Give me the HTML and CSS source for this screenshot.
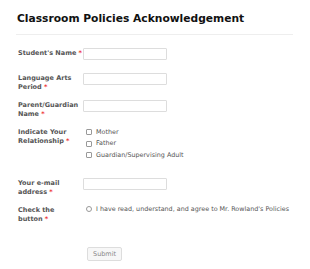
FILE: index.html
```html
<!DOCTYPE html>
<html lang="en">
<head>
  <meta charset="utf-8">
  <title>Classroom Policies Acknowledgement</title>
  <link rel="stylesheet" href="styles.css">
</head>
<body>
  <div class="form">
    <h1 class="form-title">Classroom Policies Acknowledgement</h1>
    <ul class="fields">
      <li class="field">
        <label class="field-label">Student's Name&nbsp;<span class="req">*</span></label>
        <div class="field-input"><input class="text" type="text"></div>
      </li>
      <li class="field">
        <label class="field-label">Language Arts Period&nbsp;<span class="req">*</span></label>
        <div class="field-input"><input class="text" type="text"></div>
      </li>
      <li class="field">
        <label class="field-label">Parent/Guardian Name&nbsp;<span class="req">*</span></label>
        <div class="field-input"><input class="text" type="text"></div>
      </li>
      <li class="field">
        <label class="field-label">Indicate Your Relationship&nbsp;<span class="req">*</span></label>
        <div class="field-input options">
          <label class="option"><span class="box"></span>Mother</label>
          <label class="option"><span class="box"></span>Father</label>
          <label class="option"><span class="box"></span>Guardian/Supervising Adult</label>
        </div>
      </li>
      <li class="field">
        <label class="field-label">Your e-mail address&nbsp;<span class="req">*</span></label>
        <div class="field-input"><input class="text" type="text"></div>
      </li>
      <li class="field">
        <label class="field-label">Check the button&nbsp;<span class="req">*</span></label>
        <div class="field-input">
          <label class="option"><span class="box round"></span>I have read, understand, and agree to Mr. Rowland's Policies</label>
        </div>
      </li>
    </ul>
    <div class="buttons">
      <button class="submit" type="button">Submit</button>
    </div>
  </div>
</body>
</html>
```
FILE: styles.css
```css
* {
  margin: 0;
  padding: 0;
  box-sizing: border-box;
}
body {
  background: #fff;
  font-family: "DejaVu Sans", Verdana, sans-serif;
  color: #555;
}
.form {
  padding: 12px 0 0 16px;
}
/* title + rule underneath */
.form-title {
  font-size: 10.7px;
  line-height: 13px;
  font-weight: bold;
  color: #111;
  padding-left: 1px;
  padding-bottom: 9px;
  border-bottom: 1px solid #eee;
  width: 277px;
}
.fields {
  list-style: none;
  margin-top: 13px;
}
.field {
  display: flex;
  align-items: flex-start;
  min-height: 17px;
  margin-bottom: 8px;
}
.field-label {
  flex: none;
  width: 67px;
  padding: 1px 0 0 2px;
  font-size: 6.5px;
  font-weight: bold;
  color: #555;
  line-height: 9px;
}
.req {
  color: #e33;
}
.text {
  display: block;
  width: 84px;
  height: 12px;
  border: 1px solid #ddd;
  border-radius: 1px;
  background: #fff;
}
.options {
  display: flex;
  flex-direction: column;
  gap: 2.5px;
  padding: 0.5px 0 10px;
}
.option {
  display: flex;
  align-items: center;
  white-space: nowrap;
  font-size: 6.4px;
  color: #555;
  line-height: 9px;
}
.box {
  display: inline-block;
  flex: none;
  width: 6px;
  height: 6px;
  border: 1px solid #999;
  border-radius: 1px;
  margin: 0 4px 0 3px;
}
.box.round {
  border-radius: 50%;
}
.buttons {
  display: flex;
  padding: 15px 0 0 71px;
}
.submit {
  font-family: "DejaVu Sans", Verdana, sans-serif;
  font-size: 6.5px;
  color: #888;
  background: #f7f7f7;
  border: 1px solid #ddd;
  border-radius: 2px;
  padding: 2px 5px;
}
```
